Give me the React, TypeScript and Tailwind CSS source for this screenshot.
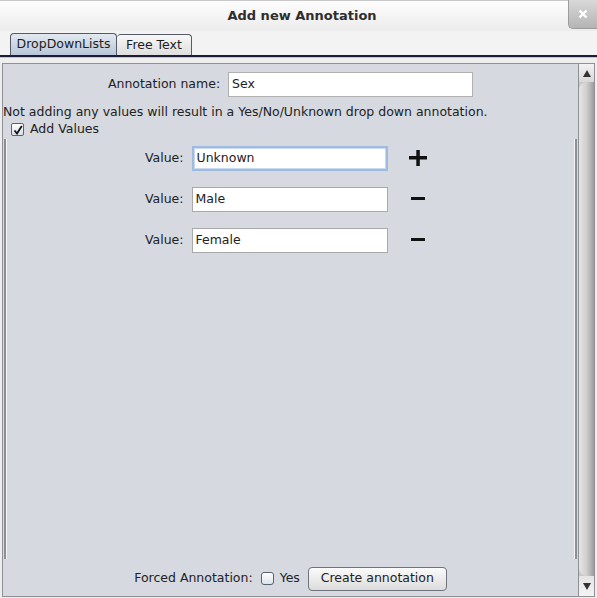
import React from 'react'

const font = { fontFamily: '"DejaVu Sans", Verdana, sans-serif' }

function Field({ value, focused }: { value: string; focused?: boolean }) {
  return (
    <div
      className={
        'h-[25px] w-[196px] bg-white flex items-center px-[3px] text-[12.5px] text-[#222] ' +
        (focused
          ? 'border-2 border-[#9fbbe0] shadow-[inset_0_0_0_1px_#c9d9ee]'
          : 'border border-[#a9a9a9]')
      }
    >
      {value}
    </div>
  )
}

function ValueRow({ value, sign, focused }: { value: string; sign: '+' | '-'; focused?: boolean }) {
  return (
    <div className="flex items-center h-[26px]">
      <div className="w-[42px] text-right text-[12.5px] text-[#222]">Value:</div>
      <div className="w-[8px]" />
      <Field value={value} focused={focused} />
      <div className="w-[20px]" />
      <div className="w-[20px] flex items-center justify-center">
        {sign === '+' ? (
          <svg width="18" height="16" viewBox="0 0 18 16">
            <rect x="0" y="6" width="18" height="3.5" fill="#111" />
            <rect x="7.3" y="0" width="3.5" height="16" fill="#111" />
          </svg>
        ) : (
          <svg width="14" height="4" viewBox="0 0 14 4">
            <rect x="0" y="0" width="14" height="3" fill="#111" />
          </svg>
        )}
      </div>
    </div>
  )
}

export default function App() {
  return (
    <div className="w-[597px] h-[598px] flex flex-col bg-[#eeeeee] overflow-hidden" style={font}>
      {/* title bar */}
      <div className="h-[31px] flex items-stretch bg-gradient-to-b from-[#fdfdfd] to-[#ececec] border-t border-[#c8c8c8]">
        <div className="flex-1 flex items-center justify-center pl-[36px] text-[13px] font-bold text-[#2e2e2e]">
          Add new Annotation
        </div>
        <div className="w-[29px] h-[29px] -mt-px rounded-bl-[5px] border-l border-b border-[#9c9c9c] bg-gradient-to-b from-[#d9d9d9] to-[#b4b4b4] flex items-center justify-center">
          <svg width="10" height="10" viewBox="0 0 10 10">
            <path d="M1.5 1.5 L8.5 8.5 M8.5 1.5 L1.5 8.5" stroke="#ffffff" strokeWidth="2.4" />
          </svg>
        </div>
      </div>

      {/* tabs */}
      <div className="h-[26px] flex items-end pl-[10px] bg-[#f3f3f3] border-b-2 border-[#1c1c34]">
        <div className="h-[22px] w-[107px] rounded-t-[4px] border border-b-0 border-[#555a66] bg-gradient-to-b from-[#e3e9f0] to-[#b7c7d8] flex items-center justify-center text-[12.5px] text-[#1c1c1c]">
          DropDownLists
        </div>
        <div className="h-[21px] w-[75px] rounded-t-[4px] border border-b-0 border-l-0 border-[#555a66] bg-gradient-to-b from-[#f8f8f8] to-[#dedede] flex items-center justify-center text-[12.5px] text-[#1c1c1c]">
          Free Text
        </div>
      </div>
      <div className="h-[1px] bg-[#b9c9dc]" />
      <div className="h-[5px] bg-[#eeeeee]" />

      {/* scroll pane */}
      <div className="flex-1 mx-[2px] mb-[1px] flex border border-[#8e9096] bg-[#d6d9e0]">
        <div className="flex-1 flex flex-col">
          <div className="h-[7px]" />
          <div className="flex items-center justify-center h-[26px] gap-[8px]">
            <div className="text-[12.5px] text-[#222]">Annotation name:</div>
            <div className="h-[25px] w-[245px] bg-white border border-[#b0b0b0] flex items-center px-[3px] text-[12.5px] text-[#222]">
              Sex
            </div>
          </div>
          <div className="h-[8px]" />
          <div className="h-[15px] flex items-center text-[12.5px] text-[#222] whitespace-nowrap">
            Not adding any values will result in a Yes/No/Unknown drop down annotation.
          </div>
          <div className="h-[2px]" />
          <div className="h-[15px] flex items-center pl-[8px] gap-[6px] text-[12.5px] text-[#222]">
            <div className="w-[13px] h-[13px] rounded-[2px] border border-[#5a6272] bg-gradient-to-b from-[#ffffff] to-[#d8dee8] flex items-center justify-center">
              <svg width="10" height="10" viewBox="0 0 10 10">
                <path d="M1.5 5.5 L4 8.5 L8.8 1" stroke="#111" strokeWidth="1.8" fill="none" />
              </svg>
            </div>
            Add Values
          </div>

          {/* values panel */}
          <div className="flex-1 mt-[2px] ml-[1px] mr-[1px] border-l-2 border-r-2 border-l-[#8c8f96] border-r-[#8c8f96] flex flex-col">
            <div className="flex-1 border-l border-r border-l-[#f4f4f4] border-r-[#f4f4f4] flex flex-col items-center pt-[6px]">
              <div className="flex flex-col gap-[15px] mr-[12px]">
                <ValueRow value="Unknown" sign="+" focused />
                <ValueRow value="Male" sign="-" />
                <ValueRow value="Female" sign="-" />
              </div>
            </div>
          </div>

          <div className="h-[37px] flex items-center justify-center text-[12.5px] text-[#222] pt-[2px]">
            <span>Forced Annotation:</span>
            <div className="w-[13px] h-[13px] ml-[8px] rounded-[3px] border border-[#5a6272] bg-gradient-to-b from-[#ffffff] to-[#dde2ea]" />
            <span className="ml-[6px]">Yes</span>
            <div className="ml-[8px] h-[24px] w-[139px] rounded-[4px] border border-[#6f737b] bg-gradient-to-b from-[#fbfbfb] to-[#dcdcdc] flex items-center justify-center">
              Create annotation
            </div>
          </div>
        </div>

        {/* scrollbar */}
        <div className="w-[16px] flex flex-col border-l border-[#8e9096] bg-[#c9c9c9]">
          <div className="h-[18px] bg-gradient-to-b from-[#f2f2f2] to-[#d8d8d8] flex items-center justify-center">
            <svg width="8" height="7" viewBox="0 0 8 7">
              <path d="M4 0 L8 7 L0 7 Z" fill="#333" />
            </svg>
          </div>
          <div className="flex-1 rounded-tl-[8px] rounded-bl-[8px] bg-gradient-to-r from-[#e6e6e6] via-[#cfcfcf] to-[#9d9d9d]" />
          <div className="h-[20px] bg-gradient-to-b from-[#e4e4e4] to-[#f4f4f4] flex items-center justify-center">
            <svg width="8" height="7" viewBox="0 0 8 7">
              <path d="M0 0 L8 0 L4 7 Z" fill="#333" />
            </svg>
          </div>
        </div>
      </div>
    </div>
  )
}
